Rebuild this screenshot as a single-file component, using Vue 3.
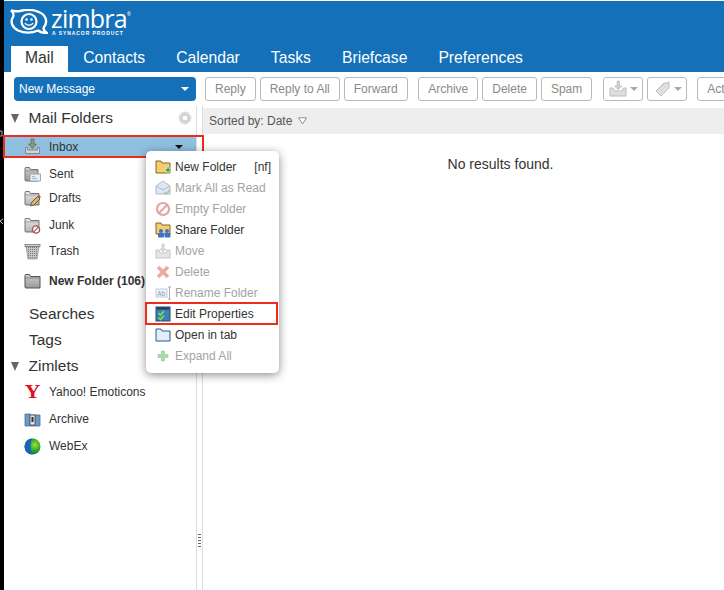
<script setup>
const tabs = ['Mail', 'Contacts', 'Calendar', 'Tasks', 'Briefcase', 'Preferences']
const group1 = ['Reply', 'Reply to All', 'Forward']
const group2 = ['Archive', 'Delete', 'Spam']
</script>

<template>
  <div class="page">
    <div class="strip">
      <svg class="specks" width="4" height="590" viewBox="0 0 4 590">
        <path d="M0 131h2v5H0" fill="none" stroke="#aaa" stroke-width="1"/>
        <path d="M3 219L0 221l3 3" fill="none" stroke="#bbb" stroke-width="1"/>
      </svg>
    </div>
    <div class="app">
      <header class="head">
        <div class="brand">
          <svg class="logo" width="38" height="25" viewBox="0 0 38 25">
            <path d="M1 1.500C4 2.500 7 2.500 10 2C16 .5 24 .5 30 3.500C36 6.500 38 13 34 18C33 20 34 22 37 24C33 24 30 23 28 21.500C22 24 14 24 8 21.500C2 18 0 13 3 8C4 6 3 3 1 1.500Z" fill="none" stroke="#fff" stroke-width="2.400"/>
            <circle cx="19" cy="12.500" r="7.500" fill="none" stroke="#fff" stroke-width="2.200"/>
            <circle cx="16.500" cy="10.500" r="1.200" fill="#fff"/>
            <circle cx="21.500" cy="10.500" r="1.200" fill="#fff"/>
            <path d="M15 14C16.500 17 21.500 17 23 14" fill="none" stroke="#fff" stroke-width="1.500"/>
          </svg>
          <div class="word">
            <div class="zimbra">zimbra<sup>®</sup></div>
            <div class="syn">A SYNACOR PRODUCT</div>
          </div>
        </div>
        <nav class="tabs">
          <div v-for="t in tabs" :key="t" class="tab" :class="{ on: t === 'Mail' }">{{ t }}</div>
        </nav>
      </header>

      <div class="toolbar">
        <div class="compose"><span>New Message</span><i class="caret white"></i></div>
        <div class="btn-groups">
          <div class="group">
            <div v-for="b in group1" :key="b" class="btn">{{ b }}</div>
          </div>
          <div class="group">
            <div v-for="b in group2" :key="b" class="btn">{{ b }}</div>
          </div>
          <div class="group">
            <div class="btn icon-btn">
              <svg width="18" height="18" viewBox="0 0 18 18">
                <path d="M8 1h2.500v5H13L9.250 10 5.500 6H8z" fill="#d0d0d0" stroke="#b8b8b8" stroke-width=".6"/>
                <path d="M1 8h3l1.500 3h7.500L14.500 8h2.500v8H1z" fill="#dedede" stroke="#bdbdbd"/>
              </svg>
              <i class="caret grey"></i>
            </div>
            <div class="btn icon-btn">
              <svg width="18" height="18" viewBox="0 0 18 18">
                <path d="M11 3h5v5l-8 8-5-5z" fill="#e2e2e2" stroke="#bdbdbd"/>
                <path d="M5 10l6-6M7 12l6-6" stroke="#cfcfcf"/>
                <path d="M14 4l3-3" stroke="#bdbdbd"/>
              </svg>
              <i class="caret grey"></i>
            </div>
          </div>
          <div class="group"><div class="btn clipped">Actions</div></div>
        </div>
      </div>

      <div class="main">
        <aside class="side">
          <svg width="0" height="0" class="defs">
            <defs>
              <linearGradient id="fold" x1="0" y1="0" x2="0" y2="1">
                <stop offset="0" stop-color="#e8e8e8"/>
                <stop offset="1" stop-color="#b4b4b4"/>
              </linearGradient>
              <linearGradient id="foldDark" x1="0" y1="0" x2="0" y2="1">
                <stop offset="0" stop-color="#cfcfcf"/>
                <stop offset="1" stop-color="#9a9a9a"/>
              </linearGradient>
              <pattern id="mesh" width="2" height="2" patternUnits="userSpaceOnUse">
                <rect width="2" height="2" fill="#c8c8c8"/>
                <rect width="1" height="1" fill="#777"/>
              </pattern>
              <radialGradient id="globe" cx=".65" cy=".4" r=".7">
                <stop offset="0" stop-color="#9fe23a"/>
                <stop offset=".55" stop-color="#2aa02a"/>
                <stop offset="1" stop-color="#13618a"/>
              </radialGradient>
            </defs>
          </svg>

          <div class="section first">
            <i class="tri"></i><span>Mail Folders</span>
            <svg class="gear" width="14" height="14" viewBox="0 0 14 14">
              <path d="M7 0l1.300 1.800 2.200-.7.300 2.300 2.300.3-.7 2.200L14 7l-1.800 1.300.7 2.200-2.300.3-.3 2.300-2.200-.7L7 14l-1.300-1.800-2.200.7-.3-2.300-2.300-.3.7-2.200L0 7l1.800-1.300-.7-2.200 2.300-.3.300-2.300 2.200.7z" fill="#d4d4d4"/>
              <circle cx="7" cy="7" r="2.300" fill="#fff"/>
            </svg>
          </div>

          <div class="row inbox">
            <svg class="ico" width="17" height="17" viewBox="0 0 17 17">
              <path d="M7 1h3v5h2.500L8.500 10.500 4.500 6H7z" fill="#8d9a78" stroke="#5c6650" stroke-width=".7"/>
              <path d="M1.500 9.500h2v2.500h10V9.500h2v6h-14z" fill="#d5d5d5" stroke="#777" stroke-width=".8"/>
            </svg>
            <span>Inbox</span>
            <i class="caret black"></i>
          </div>

          <div class="row sent">
            <svg class="ico" width="17" height="17" viewBox="0 0 17 17">
              <path d="M1 2.500Q1 1.500 2 1.500h3.500l1 2h7.500v11.500H2Q1 15 1 14z" fill="url(#foldDark)" stroke="#666" stroke-width=".9"/>
              <path d="M1 5h13" stroke="#888" stroke-width=".7"/>
              <rect x="6" y="8" width="10.500" height="7" fill="#e8eef6" stroke="#8a98aa" stroke-width=".8"/>
              <path d="M8 10.500h3M8 12.500h5" stroke="#93a4bd" stroke-width=".8"/>
            </svg>
            <span>Sent</span>
          </div>
          <div class="row drafts">
            <svg class="ico" width="17" height="17" viewBox="0 0 17 17">
              <path d="M1 2.500Q1 1.500 2 1.500h3.500l1 2h8.500v11.500H2Q1 15 1 14z" fill="url(#fold)" stroke="#666" stroke-width=".9"/>
              <path d="M1 5h14" stroke="#888" stroke-width=".7"/>
              <path d="M6.500 16l1-3.500 6-6 2.500 2.500-6 6z" fill="#d8b45c" stroke="#54452a" stroke-width=".8"/>
              <path d="M13.500 6.500l1.500-1.500 2 2L15.500 8.500z" fill="#c05050"/>
            </svg>
            <span>Drafts</span>
          </div>
          <div class="row junk">
            <svg class="ico" width="17" height="17" viewBox="0 0 17 17">
              <path d="M1 2.500Q1 1.500 2 1.500h3.500l1 2h8.500v11.500H2Q1 15 1 14z" fill="url(#fold)" stroke="#666" stroke-width=".9"/>
              <path d="M1 5h14" stroke="#888" stroke-width=".7"/>
              <circle cx="12" cy="12.500" r="3.600" fill="#fff" stroke="#a05050" stroke-width="1.400"/>
              <path d="M9.700 14.800l4.600-4.600" stroke="#a05050" stroke-width="1.200"/>
            </svg>
            <span>Junk</span>
          </div>
          <div class="row trash">
            <svg class="ico" width="17" height="17" viewBox="0 0 17 17">
              <path d="M2 3l2 13h9l2-13z" fill="url(#mesh)" stroke="#888" stroke-width=".7"/>
              <rect x="1" y="1.500" width="15" height="2" fill="#d5d5d5" stroke="#666" stroke-width=".7"/>
            </svg>
            <span>Trash</span>
          </div>
          <div class="row folder">
            <svg class="ico" width="17" height="17" viewBox="0 0 17 17">
              <path d="M1 2.500Q1 1.500 2 1.500h3.500l1 2h9.500v11.500H2Q1 15 1 14z" fill="url(#foldDark)" stroke="#555" stroke-width="1"/>
              <path d="M1 5h15" stroke="#777" stroke-width=".8"/>
            </svg>
            <b>New Folder (106)</b>
          </div>

          <div class="section plain s1"><span>Searches</span></div>
          <div class="section plain"><span>Tags</span></div>
          <div class="section s3"><i class="tri"></i><span>Zimlets</span></div>

          <div class="row yahoo">
            <span class="y-mark">Y</span>
            <span>Yahoo! Emoticons</span>
          </div>
          <div class="row archive">
            <svg class="ico" width="17" height="17" viewBox="0 0 17 17">
              <path d="M1 3h5l1 1h9v11H1z" fill="#6d9ac4" stroke="#4a6e90" stroke-width=".8"/>
              <rect x="6" y="4" width="5" height="10" fill="#e4e4e4" stroke="#333" stroke-width=".7"/>
              <rect x="7.500" y="6" width="2" height="5" fill="#333"/>
            </svg>
            <span>Archive</span>
          </div>
          <div class="row webex">
            <svg class="ico" width="17" height="17" viewBox="0 0 17 17">
              <circle cx="8.500" cy="8.500" r="8" fill="url(#globe)"/>
              <path d="M8.500.5A8 8 0 0 0 8.500 16.500C6 13 6 4 8.500.5z" fill="#1466b8"/>
            </svg>
            <span>WebEx</span>
          </div>
        </aside>

        <div class="divider">
          <div class="rule top"></div>
          <div class="grip"><i></i><i></i><i></i><i></i><i></i></div>
          <div class="rule"></div>
        </div>

        <section class="content">
          <div class="sortbar">
            <span>Sorted by: Date</span>
            <svg width="9" height="8" viewBox="0 0 9 8"><path d="M.5 .8h8L4.500 7z" fill="#fff" stroke="#777" stroke-width=".8"/></svg>
          </div>
          <div class="empty">No results found.</div>
        </section>
      </div>

      <div class="menu">
        <div class="mi">
          <svg width="17" height="16" viewBox="0 0 17 16"><path d="M1 2h5l1 2h8v10H1z" fill="#f2cf70" stroke="#8a6420"/><path d="M12 8h2v2h2v2h-2v2h-2v-2h-2v-2h2z" fill="#3ca03c" stroke="#fff" stroke-width=".5"/></svg>
          <span class="lbl">New Folder</span><span class="key">[nf]</span>
        </div>
        <div class="mi off">
          <svg width="17" height="16" viewBox="0 0 17 16"><path d="M1 6l7-5 7 5v8H1z" fill="#dfe8f2" stroke="#aebccb"/><path d="M1 6l7 4 7-4" fill="none" stroke="#aebccb"/><path d="M9 12l2 2 4-4" fill="none" stroke="#9ac79a" stroke-width="1.500"/></svg>
          <span class="lbl">Mark All as Read</span>
        </div>
        <div class="mi off">
          <svg width="17" height="16" viewBox="0 0 17 16"><circle cx="8" cy="8" r="6" fill="none" stroke="#e0a6a6" stroke-width="2.200"/><path d="M4 12l8-8" stroke="#e0a6a6" stroke-width="2.200"/></svg>
          <span class="lbl">Empty Folder</span>
        </div>
        <div class="mi">
          <svg width="17" height="16" viewBox="0 0 17 16"><path d="M1 1h5l1 2h8v9H1z" fill="#f2cf70" stroke="#8a6420"/><circle cx="6" cy="9" r="2" fill="#3b73c8"/><circle cx="12" cy="9" r="2" fill="#3b73c8"/><rect x="3" y="11" width="6" height="4.500" rx="1" fill="#3b73c8"/><rect x="9.500" y="11" width="6" height="4.500" rx="1" fill="#3b73c8"/></svg>
          <span class="lbl">Share Folder</span>
        </div>
        <div class="mi off">
          <svg width="17" height="16" viewBox="0 0 17 16"><path d="M7 1h2v5h2L8 9 5 6h2z" fill="#dcdcdc" stroke="#c4c4c4" stroke-width=".6"/><path d="M1 7h3l1 3h6l1-3h3v8H1z" fill="#e6e6e6" stroke="#c4c4c4"/></svg>
          <span class="lbl">Move</span>
        </div>
        <div class="mi off">
          <svg width="17" height="16" viewBox="0 0 17 16"><path d="M3 3l10 10M13 3L3 13" stroke="#eba9a0" stroke-width="3.600"/></svg>
          <span class="lbl">Delete</span>
        </div>
        <div class="mi off">
          <svg width="17" height="16" viewBox="0 0 17 16"><rect x="1" y="4" width="11" height="8" fill="#eef2f8" stroke="#c4cede"/><text x="2.500" y="11" font-size="6.500" font-family="Liberation Mono" fill="#8a9ab0">Ab</text><path d="M13 2h3M13 14h3M14.500 2v12" stroke="#aaa" fill="none"/></svg>
          <span class="lbl">Rename Folder</span>
        </div>
        <div class="mi marked">
          <svg width="17" height="16" viewBox="0 0 17 16"><rect x="1" y="1" width="14" height="14" fill="#3f7fb8" stroke="#234a70"/><rect x="2" y="1.500" width="12" height="2" fill="#1e3a60"/><path d="M3.500 7l2 2 3.500-4M3.500 11.500l2 2 3.500-4" fill="none" stroke="#7fe04a" stroke-width="1.700"/></svg>
          <span class="lbl">Edit Properties</span>
        </div>
        <div class="mi">
          <svg width="17" height="16" viewBox="0 0 17 16"><path d="M1 2h5l1 2h8v10H1z" fill="#e4eefa" stroke="#2a5a90"/></svg>
          <span class="lbl">Open in tab</span>
        </div>
        <div class="mi off">
          <svg width="17" height="16" viewBox="0 0 17 16"><path d="M6.500 3h3v3.500H13v3H9.500V13h-3V9.500H3v-3h3.500z" fill="#a9dba9" stroke="#94cc94" stroke-width=".6"/></svg>
          <span class="lbl">Expand All</span>
        </div>
      </div>
    </div>
  </div>
</template>

<style>
html, body { margin: 0; padding: 0; background: #fff; overflow: hidden; }
</style>

<style scoped>
.page {
  display: flex;
  width: 724px;
  height: 590px;
  overflow: hidden;
  background: #fff;
  font-family: "Liberation Sans", Arial, sans-serif;
  color: #333;
}
.strip { flex: 0 0 4px; background: #000; }
.specks { display: block; }
.defs { position: absolute; }
.app { flex: 1; min-width: 0; position: relative; display: flex; flex-direction: column; }

.head { height: 71px; margin-top: 1px; background: #1470b8; display: flex; flex-direction: column; justify-content: space-between; }
.brand { display: flex; align-items: flex-start; padding: 8px 0 0 6px; color: #fff; }
.logo { display: block; }
.word { margin-left: 3px; margin-top: -2px; }
.zimbra { font-family: "Open Sans", sans-serif; font-size: 25px; line-height: 23px; letter-spacing: -0.8px; height: 23px; white-space: nowrap; }
.zimbra sup { font-size: 5px; vertical-align: top; line-height: 14px; letter-spacing: 0; }
.syn { font-size: 5px; font-weight: 700; letter-spacing: .93px; line-height: 6px; white-space: nowrap; margin-left: 1px; }

.tabs { display: flex; padding-left: 7px; height: 26px; }
.tab { color: #fff; font-size: 15.700px; line-height: 23px; padding: 0 15.500px; white-space: nowrap; }
.tab.on { background: #fff; color: #333; padding: 0 14px; }

.toolbar { height: 34px; display: flex; align-items: flex-start; padding: 5px 0 0 10px; box-sizing: border-box; }
.compose {
  flex: 0 0 182px; height: 24px; box-sizing: border-box; background: #1470b8; color: #fff;
  border-radius: 4px; font-size: 12px; line-height: 24px; padding: 0 7px 0 5px;
  display: flex; justify-content: space-between; align-items: center;
}
.btn-groups { display: flex; margin-left: 9px; gap: 10.500px; white-space: nowrap; }
.group { display: flex; gap: 4px; }
.btn {
  height: 24px; box-sizing: border-box; border: 1px solid #b9b9b9; border-radius: 3px;
  font-size: 12px; line-height: 22px; color: #8a8a8a; padding: 0 9px; background: #fff;
}
.icon-btn { width: 40px; padding: 0 0 0 5px; display: flex; align-items: center; gap: 3px; }
.clipped { padding-right: 20px; }

.caret { display: inline-block; width: 0; height: 0; border-left: 4px solid transparent; border-right: 4px solid transparent; border-top: 4px solid #fff; }
.caret.grey { border-top-color: #aaa; }
.caret.black { border-top-color: #111; margin-left: auto; margin-right: 20px; }

.main { flex: 1; display: flex; min-height: 0; }
.side { flex: 0 0 192px; width: 192px; font-size: 12px; color: #333; }
.section { display: flex; align-items: center; font-size: 15.500px; height: 26px; color: #333; position: relative; }
.section.first { height: 24px; padding-left: 7px; margin-bottom: 6px; }
.section.first .gear { position: absolute; right: 4px; top: 5px; }
.tri { width: 0; height: 0; border-left: 4.500px solid transparent; border-right: 4.500px solid transparent; border-top: 9px solid #666; margin-right: 9.500px; }
.section.plain { padding-left: 25px; }
.section.s3 { padding-left: 7px; }
.s1 { margin-top: 9px; }

.row { display: flex; align-items: center; height: 22px; padding-left: 20px; box-sizing: border-box; white-space: nowrap; }
.row .ico { flex: 0 0 auto; margin-right: 8px; }
.row b { font-weight: 700; }
.inbox {
  position: relative; width: 199px; height: 21px; margin-bottom: 6px;
  background: linear-gradient(#8fc0e0, #8fc0e0) no-repeat left top / 192px 100%;
  outline: 2px solid #ee2b1c; outline-offset: -1px;
}
.drafts { margin-top: 2px; }
.junk { margin-top: 5px; }
.trash { margin-top: 4px; }
.folder { margin-top: 8px; }
.yahoo { margin-top: 2px; }
.archive, .webex { margin-top: 5px; }
.y-mark { width: 17px; margin-right: 8px; color: #e01020; font-family: "Liberation Serif", serif; font-weight: 700; font-size: 18px; line-height: 20px; text-align: center; transform: scaleX(1.2); }

.divider { flex: 0 0 7px; display: flex; flex-direction: column; }
.rule { flex: 1; border-left: 1px solid #ddd; border-right: 1px solid #ddd; }
.rule.top { flex: 0 0 428px; }
.grip { height: 14px; border-left: 1px solid #ddd; border-right: 1px solid #ddd; display: flex; flex-direction: column; gap: 2px; padding: 0 0 0 1px; box-sizing: border-box; }
.grip i { display: block; width: 3px; height: 1px; background: #666; }

.content { flex: 1; min-width: 0; }
.sortbar { height: 26px; margin-top: 2px; background: #eee; font-size: 12px; line-height: 26px; padding-left: 6px; color: #555; display: flex; align-items: center; gap: 6px; }
.empty { margin-top: 22px; font-size: 14px; color: #333; text-align: center; padding-left: 74px; }

.menu {
  position: absolute; left: 142px; top: 151px; width: 133px; padding: 5px 0 7px;
  background: #fff; border-radius: 5px; box-shadow: 0 2px 10px rgba(0,0,0,.45);
  box-sizing: border-box; z-index: 2; font-size: 12px; color: #333;
}
.mi { height: 21px; display: flex; align-items: center; padding: 0 8px 0 9px; box-sizing: border-box; white-space: nowrap; }
.mi svg { flex: 0 0 17px; margin-right: 3px; }
.mi .lbl { flex: 1; }
.mi.off { color: #a3a3a3; }
.mi.marked { outline: 2px solid #ee2b1c; outline-offset: -1px; margin-right: 2px; }
</style>
